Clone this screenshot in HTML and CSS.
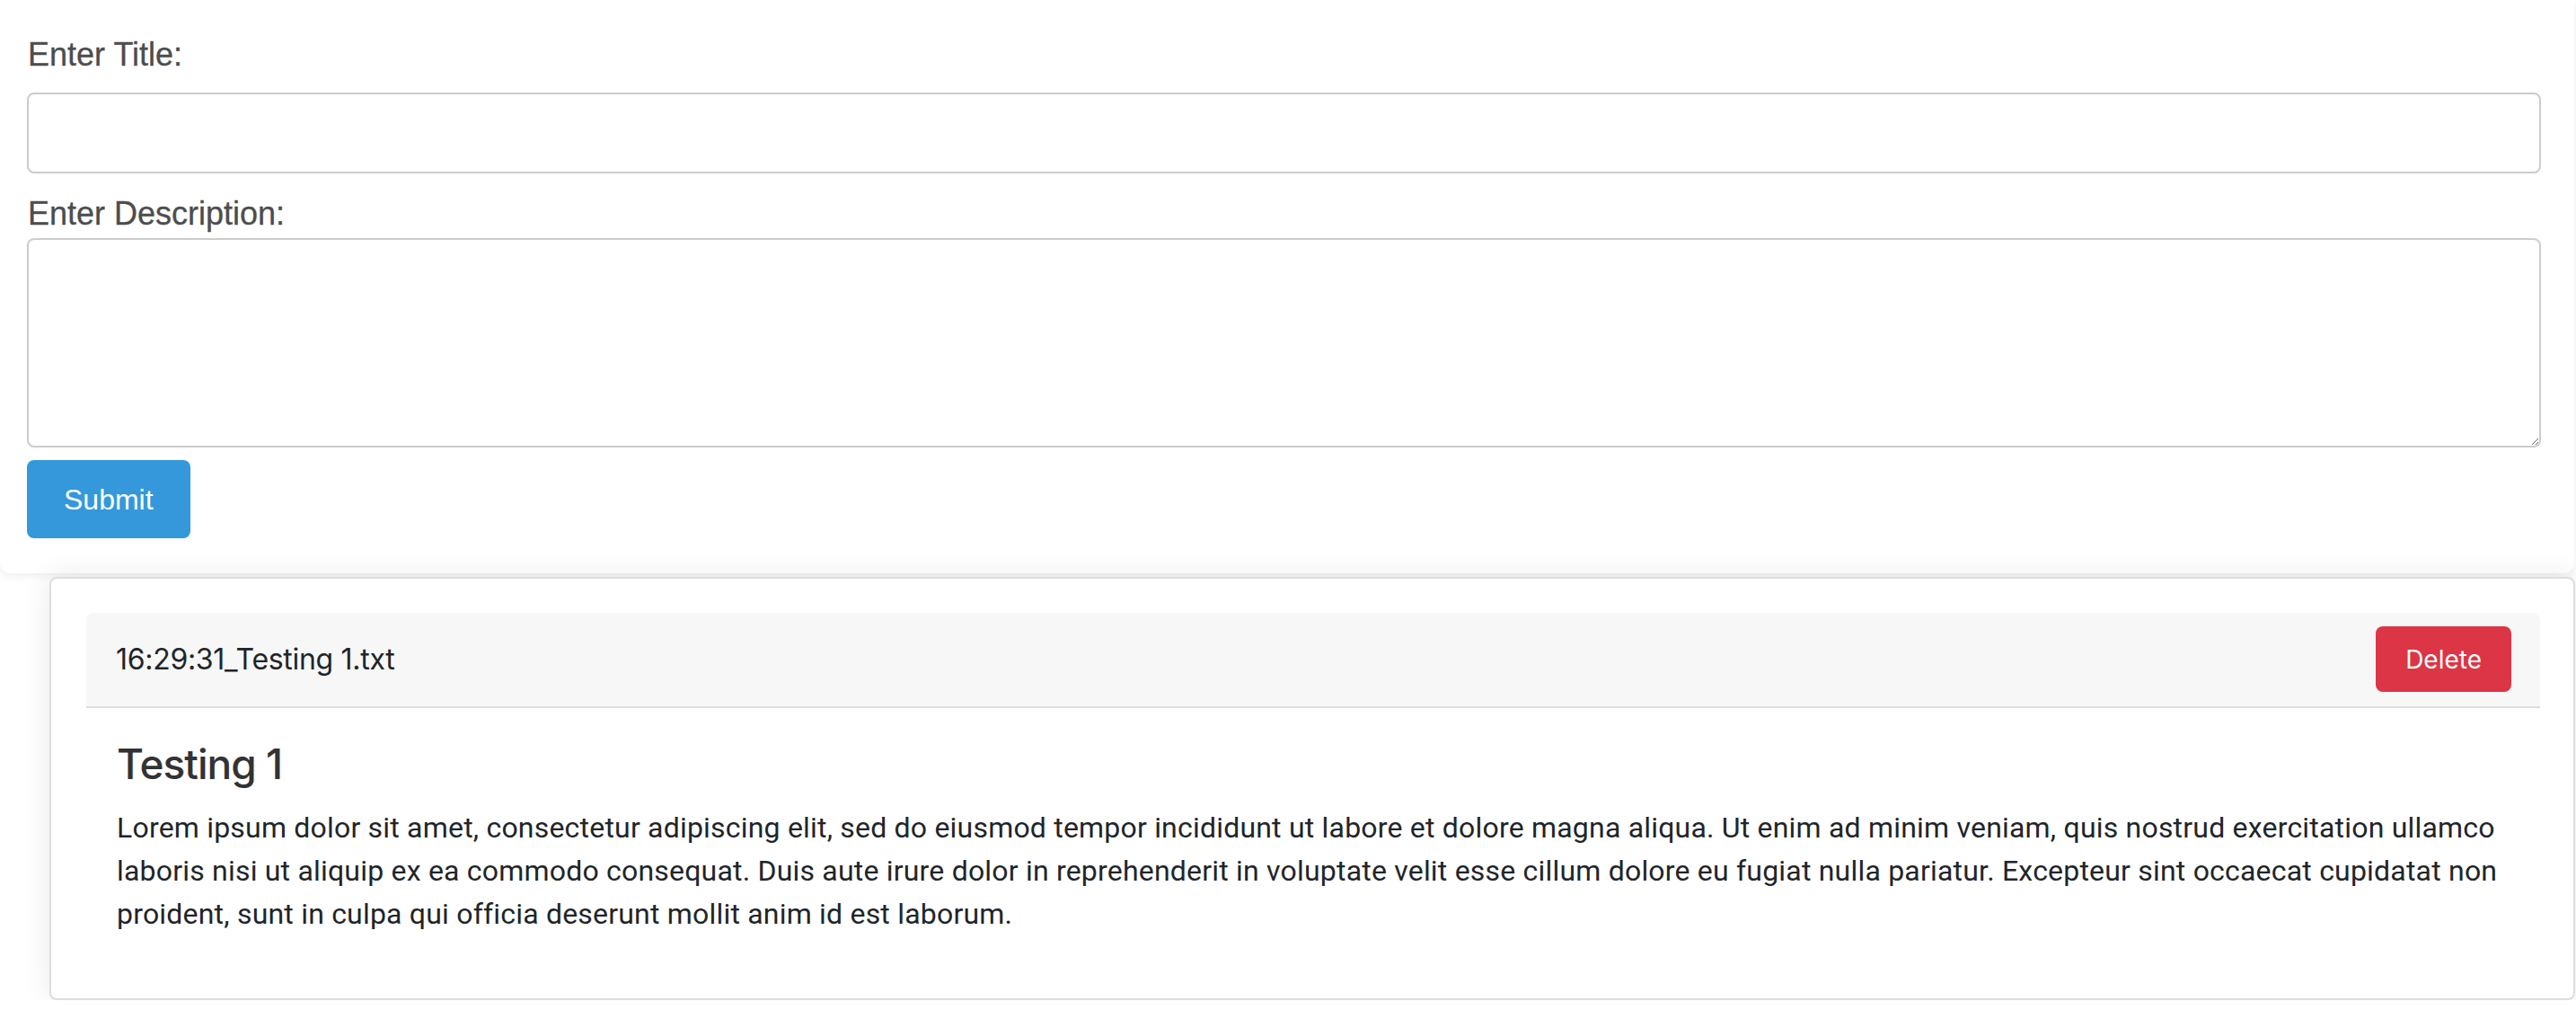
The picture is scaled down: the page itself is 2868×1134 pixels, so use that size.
FILE: index.html
```html
<!DOCTYPE html>
<html lang="en">
<head>
<meta charset="utf-8">
<title>Notes</title>
<link rel="stylesheet" href="styles.css">
</head>
<body>
<form class="note-form">
  <label class="field-label label-title" for="title">Enter Title:</label>
  <input class="field-input" id="title" type="text">
  <label class="field-label label-desc" for="desc">Enter Description:</label>
  <textarea class="field-area" id="desc"></textarea>
  <button class="btn-submit" type="button">Submit</button>
</form>
<section class="notes">
  <div class="note">
    <div class="note-header">
      <span class="note-file">16:29:31_Testing 1.txt</span>
      <button class="btn-delete" type="button">Delete</button>
    </div>
    <div class="note-body">
      <h4 class="note-title">Testing 1</h4>
      <p class="note-text">Lorem ipsum dolor sit amet, consectetur adipiscing elit, sed do eiusmod tempor incididunt ut labore et dolore magna aliqua. Ut enim ad minim veniam, quis nostrud exercitation ullamco laboris nisi ut aliquip ex ea commodo consequat. Duis aute irure dolor in reprehenderit in voluptate velit esse cillum dolore eu fugiat nulla pariatur. Excepteur sint occaecat cupidatat non proident, sunt in culpa qui officia deserunt mollit anim id est laborum.</p>
    </div>
  </div>
</section>
</body>
</html>
```
FILE: styles.css
```css
* { box-sizing: border-box; }

html, body {
  margin: 0;
  padding: 0;
  background: #ffffff;
}

body {
  font-family: Inter, "Liberation Sans", Arial, sans-serif;
  color: #212529;
}

.note-form {
  display: flex;
  flex-direction: column;
  align-items: stretch;
  width: calc(100% - 2px);
  padding: 40px 37px 39px 30px;
  background: #ffffff;
  border-radius: 0 0 12px 12px;
  box-shadow: 0 2px 12px rgba(0, 0, 0, 0.08);
  position: relative;
  z-index: 1;
}

.field-label {
  font-family: "Liberation Sans", Arial, sans-serif;
  font-size: 36px;
  line-height: 41px;
  color: #4d4d4d;
  padding-left: 1px;
  -webkit-text-stroke: 0.3px #4d4d4d;
}

.label-title { margin-bottom: 22px; }
.label-desc { margin-top: 24px; margin-bottom: 7px; }

.field-input,
.field-area {
  display: block;
  width: 100%;
  border: 2px solid #cccccc;
  border-radius: 8px;
  background: #ffffff;
  font-family: "Liberation Sans", Arial, sans-serif;
  font-size: 32px;
  padding: 10px 16px;
  margin: 0;
}

.field-input { height: 90px; }
.field-area { height: 233px; resize: both; }

.btn-submit {
  align-self: flex-start;
  margin-top: 14px;
  height: 87px;
  padding: 0 41px;
  border: none;
  border-radius: 8px;
  background: #3498db;
  color: #ffffff;
  font-family: "Liberation Sans", Arial, sans-serif;
  font-size: 32px;
  line-height: 1;
}

.notes {
  margin: 4px 1px 0 55px;
  position: relative;
  z-index: 2;
}

.note {
  border: 2px solid #dddddd;
  border-radius: 8px;
  background: #ffffff;
  padding: 38px 37px 38px 39px;
  box-shadow: 0 0 32px rgba(0, 0, 0, 0.09);
}

.note-header {
  display: flex;
  align-items: center;
  justify-content: space-between;
  background: #f7f7f7;
  border-bottom: 2px solid #dddddd;
  border-radius: 8px 8px 0 0;
  padding: 15px 32px 16px 33px;
}

.note-file {
  font-size: 32px;
  line-height: 48px;
  color: #212529;
  letter-spacing: -0.3px;
}

.btn-delete {
  height: 73px;
  padding: 0 33px;
  border: none;
  border-radius: 8px;
  background: #dc3545;
  color: #ffffff;
  font-family: Inter, "Liberation Sans", Arial, sans-serif;
  font-size: 28px;
  line-height: 1;
}

.note-body {
  padding: 34px 34px 32px 34px;
}

.note-title {
  margin: 0 0 17px 0;
  font-size: 46px;
  line-height: 57.6px;
  font-weight: 500;
  color: #333333;
  letter-spacing: -1px;
}

.note-text {
  margin: 0;
  font-family: Roboto, Inter, "Liberation Sans", Arial, sans-serif;
  font-size: 32px;
  line-height: 48px;
  color: #212529;
  letter-spacing: 0.2px;
}
```
